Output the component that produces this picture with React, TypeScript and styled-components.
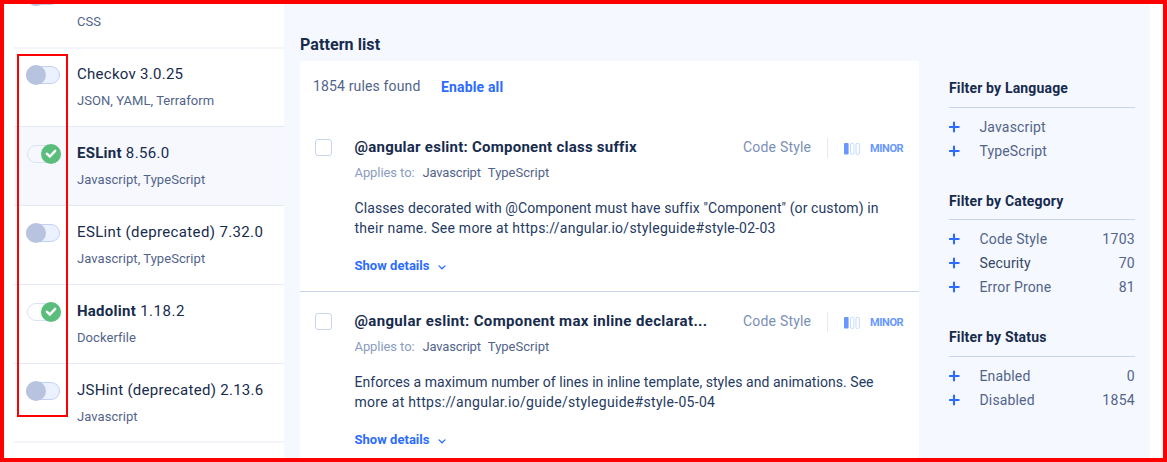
import React from "react";
import styled, { createGlobalStyle } from "styled-components";

const GlobalStyle = createGlobalStyle`
  *, *::before, *::after { box-sizing: border-box; }
  body {
    margin: 0;
    background: #fff;
    font-family: Roboto, "Noto Sans", sans-serif;
    color: #172b4d;
  }
`;

const Frame = styled.div`
  position: relative;
  display: flex;
  width: 1167px;
  height: 462px;
  overflow: hidden;
  border: 4px solid #ff0000;
  padding: 0 13px 0 10px;
  background: #fff;
`;

const Highlight = styled.div`
  position: absolute;
  left: 13px;
  top: 50px;
  width: 51px;
  height: 363px;
  border: 2px solid #ff0000;
`;

const Sidebar = styled.aside`
  flex: none;
  width: 270px;
  display: flex;
  flex-direction: column;
  justify-content: flex-start;
  margin-top: -35px;
`;

const ToolRow = styled.div<{ $selected?: boolean; $height?: number; $soft?: boolean; $top?: number }>`
  flex: none;
  display: flex;
  align-items: flex-start;
  height: ${(p) => p.$height ?? 79}px;
  padding: ${(p) => p.$top ?? 16}px 0 0 12px;
  border-bottom: ${(p) => (p.$soft ? "2px solid #f3f5fa" : "1px solid #e4eaf4")};
  background: ${(p) => (p.$selected ? "#f6f8fe" : "#fff")};
`;

const Track = styled.span<{ $on?: boolean }>`
  flex: none;
  display: flex;
  align-items: center;
  justify-content: ${(p) => (p.$on ? "flex-end" : "flex-start")};
  width: 34px;
  height: 18px;
  margin: ${(p) => (p.$on ? "2px 16px 0 1px" : "2px 17px 0 0")};
  border: 1px solid ${(p) => (p.$on ? "#d9e2f3" : "#c3d0fa")};
  border-radius: 9px;
  background: ${(p) => (p.$on ? "transparent" : "#ebf1fe")};
`;

const Knob = styled.span<{ $on?: boolean }>`
  flex: none;
  display: flex;
  align-items: center;
  justify-content: center;
  width: 20px;
  height: 20px;
  margin: 0 -1px;
  border-radius: 50%;
  background: ${(p) => (p.$on ? "#5bbd7c" : "#b7c3df")};
`;

const ToolText = styled.div`
  display: flex;
  flex-direction: column;
  gap: 8px;
`;

const ToolName = styled.div<{ $tracking?: number }>`
  font-size: 15px;
  line-height: 20px;
  letter-spacing: ${(p) => p.$tracking ?? 0.36}px;
  white-space: nowrap;
  b { font-weight: 700; letter-spacing: 0.25px; }
`;

const ToolLangs = styled.div`
  font-size: 13px;
  line-height: 18px;
  letter-spacing: 0.06px;
  color: #52648a;
`;

const Workspace = styled.div`
  flex: 1;
  display: flex;
  background: #f5f8ff;
`;

const Patterns = styled.main`
  flex: none;
  width: 619px;
  margin: 31px 30px 0 16px;
`;

const Heading = styled.h1`
  margin: 0 0 6px;
  font-size: 16px;
  line-height: 20px;
  letter-spacing: 0.08px;
`;

const Card = styled.section`
  height: 410px;
  background: #fff;
`;

const Summary = styled.div`
  display: flex;
  align-items: center;
  gap: 20.5px;
  height: 57px;
  padding: 0 0 7px 13px;
  font-size: 14px;
  letter-spacing: 0.15px;
  color: #52648a;
`;

const EnableAll = styled.a`
  margin-top: 2px;
  font-weight: 700;
  color: #2c6bff;
`;

const Rule = styled.article`
  display: flex;
  height: 174px;
  padding: 19px 15px 0;
  border-bottom: 1px solid #c9d5ec;
  &:last-child { border-bottom: 0; }
`;

const Checkbox = styled.span`
  flex: none;
  width: 17px;
  height: 17px;
  margin: 2px 22.5px 0 0;
  border: 1px solid #c9d5ef;
  border-radius: 3px;
`;

const RuleBody = styled.div`
  flex: 1;
  min-width: 0;
`;

const RuleHead = styled.div`
  display: flex;
  height: 20px;
  align-items: center;
`;

const RuleTitle = styled.h2<{ $tracking: number }>`
  flex: 1;
  margin: 0;
  font-size: 15px;
  line-height: 20px;
  letter-spacing: ${(p) => p.$tracking}px;
  white-space: nowrap;
`;

const Category = styled.span`
  width: 84px;
  flex: none;
  font-size: 14px;
  letter-spacing: 0.2px;
  color: #7b8fb5;
`;

const Severity = styled.span`
  flex: none;
  display: flex;
  align-items: center;
  gap: 10px;
  width: 77px;
  height: 20px;
  margin-top: 1px;
  padding-left: 16px;
  border-left: 1px solid #e3e9f5;
  font-size: 11px;
  font-weight: 700;
  letter-spacing: -0.4px;
  white-space: nowrap;
  color: #6897ff;
  svg { flex: none; margin-top: 2px; }
`;

const SeverityName = styled.span`
  padding-top: 2px;
`;

const Applies = styled.div`
  display: flex;
  gap: 8px;
  margin-top: 6px;
  font-size: 13px;
  line-height: 20px;
  letter-spacing: -0.18px;
  color: #52648a;
  span:first-child { color: #8a9dc0; letter-spacing: -0.08px; }
  span:last-child { letter-spacing: 0.02px; margin-left: -1px; }
`;

const Description = styled.p`
  margin: 15px 0 0;
  font-size: 14px;
  line-height: 20px;
  color: #253a63;
`;

const Line = styled.span<{ $tracking: number }>`
  display: block;
  white-space: nowrap;
  letter-spacing: ${(p) => p.$tracking}px;
`;

const Details = styled.a`
  display: flex;
  align-items: center;
  gap: 8px;
  margin-top: 19px;
  font-size: 13px;
  line-height: 18px;
  letter-spacing: 0.03px;
  font-weight: 700;
  color: #2c6bff;
  svg { margin-top: 3px; }
`;

const Filters = styled.aside`
  width: 186px;
  padding-top: 73px;
`;

const FilterGroup = styled.section<{ $bottom: number }>`
  padding-bottom: ${(p) => p.$bottom}px;
`;

const FilterTitle = styled.h3<{ $height: number }>`
  height: ${(p) => p.$height}px;
  margin: 0 0 7px;
  border-bottom: 1px solid #c9d5f0;
  font-size: 14px;
  line-height: 22px;
  letter-spacing: 0.16px;
`;

const FilterRow = styled.div<{ $strong?: boolean }>`
  display: flex;
  align-items: center;
  height: 24px;
  font-size: 14px;
  letter-spacing: 0.15px;
  color: ${(p) => (p.$strong ? "#354766" : "#52648a")};
  svg { flex: none; margin-right: 19.5px; }
`;

const Count = styled.span`
  margin-left: auto;
  letter-spacing: 0.3px;
  color: #52648a;
`;

const Toggle = ({ on }: { on?: boolean }) => (
  <Track $on={on}>
    <Knob $on={on}>
      {on && (
        <svg width="12" height="10" viewBox="0 0 12 10" fill="none">
          <path d="M1.8 4.7 4.8 7.5 10.2 1.8" stroke="#fff" strokeWidth="2.4" strokeLinecap="round" />
        </svg>
      )}
    </Knob>
  </Track>
);

const Plus = () => (
  <svg width="11" height="12" viewBox="0 0 11 12" fill="none">
    <path d="M5 1.5v9M.8 6h8.9" stroke="#2c6bff" strokeWidth="2.1" strokeLinecap="round" />
  </svg>
);

const Bars = () => (
  <svg width="16" height="12" viewBox="0 0 16 12" fill="none">
    <rect x="0" y="0" width="4.6" height="11.5" rx="1" fill="#6897ff" />
    <rect x="6.5" y=".5" width="3.4" height="10.8" rx=".8" stroke="#c9d9ff" />
    <rect x="12" y=".5" width="3.4" height="10.8" rx=".8" stroke="#c9d9ff" />
  </svg>
);

const Chevron = () => (
  <svg width="8" height="5" viewBox="0 0 8 5" fill="none">
    <path d="m1 .9 3 2.9L7 .9" stroke="#2c6bff" strokeWidth="1.3" strokeLinecap="round" />
  </svg>
);

type Tool = {
  name: string;
  version: string;
  langs: string;
  on?: boolean;
  selected?: boolean;
  height?: number;
  soft?: boolean;
  top?: number;
  tracking?: number;
};

const tools: Tool[] = [
  { name: "", version: "", langs: "CSS", soft: true, height: 80 },
  { name: "Checkov", version: "3.0.25", langs: "JSON, YAML, Terraform", height: 78, top: 15, tracking: 0.27 },
  { name: "ESLint", version: "8.56.0", langs: "Javascript, TypeScript", on: true, selected: true },
  { name: "ESLint (deprecated)", version: "7.32.0", langs: "Javascript, TypeScript" },
  { name: "Hadolint", version: "1.18.2", langs: "Dockerfile", on: true, tracking: 0.5 },
  { name: "JSHint (deprecated)", version: "2.13.6", langs: "Javascript", soft: true, tracking: 0.28 },
];

type Item = { title: string; tracking: number; lines: [string, number][] };

const rules: Item[] = [
  {
    title: "@angular eslint: Component class suffix",
    tracking: 0.25,
    lines: [
      ['Classes decorated with @Component must have suffix "Component" (or custom) in', 0.1],
      ["their name. See more at https://angular.io/styleguide#style-02-03", 0.26],
    ],
  },
  {
    title: "@angular eslint: Component max inline declarat...",
    tracking: 0.35,
    lines: [
      ["Enforces a maximum number of lines in inline template, styles and animations. See", 0.05],
      ["more at https://angular.io/guide/styleguide#style-05-04", 0.3],
    ],
  },
];

type Group = { title: string; titleHeight: number; bottom: number; rows: [string, string?][] };

const groups: Group[] = [
  { title: "Filter by Language", titleHeight: 31, bottom: 27, rows: [["Javascript"], ["TypeScript"]] },
  { title: "Filter by Category", titleHeight: 30, bottom: 27, rows: [["Code Style", "1703"], ["Security", "70"], ["Error Prone", "81"]] },
  { title: "Filter by Status", titleHeight: 31, bottom: 0, rows: [["Enabled", "0"], ["Disabled", "1854"]] },
];

export default function App() {
  return (
    <>
      <GlobalStyle />
      <Frame>
        <Sidebar>
          {tools.map((t) => (
            <ToolRow key={t.name} $selected={t.selected} $height={t.height} $soft={t.soft} $top={t.top}>
              <Toggle on={t.on} />
              <ToolText>
                <ToolName $tracking={t.tracking}>
                  {t.on ? <b>{t.name}</b> : t.name || "\u00a0"} {t.version}
                </ToolName>
                <ToolLangs>{t.langs}</ToolLangs>
              </ToolText>
            </ToolRow>
          ))}
        </Sidebar>
        <Workspace>
          <Patterns>
            <Heading>Pattern list</Heading>
            <Card>
              <Summary>
                <span>1854 rules found</span>
                <EnableAll>Enable all</EnableAll>
              </Summary>
              {rules.map((r) => (
                <Rule key={r.title}>
                  <Checkbox />
                  <RuleBody>
                    <RuleHead>
                      <RuleTitle $tracking={r.tracking}>{r.title}</RuleTitle>
                      <Category>Code Style</Category>
                      <Severity>
                        <Bars />
                        <SeverityName>MINOR</SeverityName>
                      </Severity>
                    </RuleHead>
                    <Applies>
                      <span>Applies to:</span>
                      <span>Javascript</span>
                      <span>TypeScript</span>
                    </Applies>
                    <Description>
                      {r.lines.map(([text, tracking]) => (
                        <Line key={text} $tracking={tracking}>{text}</Line>
                      ))}
                    </Description>
                    <Details>
                      Show details
                      <Chevron />
                    </Details>
                  </RuleBody>
                </Rule>
              ))}
            </Card>
          </Patterns>
          <Filters>
            {groups.map((g) => (
              <FilterGroup key={g.title} $bottom={g.bottom}>
                <FilterTitle $height={g.titleHeight}>{g.title}</FilterTitle>
                {g.rows.map(([label, count]) => (
                  <FilterRow key={label} $strong={label === "Security"}>
                    <Plus />
                    {label}
                    {count && <Count>{count}</Count>}
                  </FilterRow>
                ))}
              </FilterGroup>
            ))}
          </Filters>
        </Workspace>
        <Highlight />
      </Frame>
    </>
  );
}
